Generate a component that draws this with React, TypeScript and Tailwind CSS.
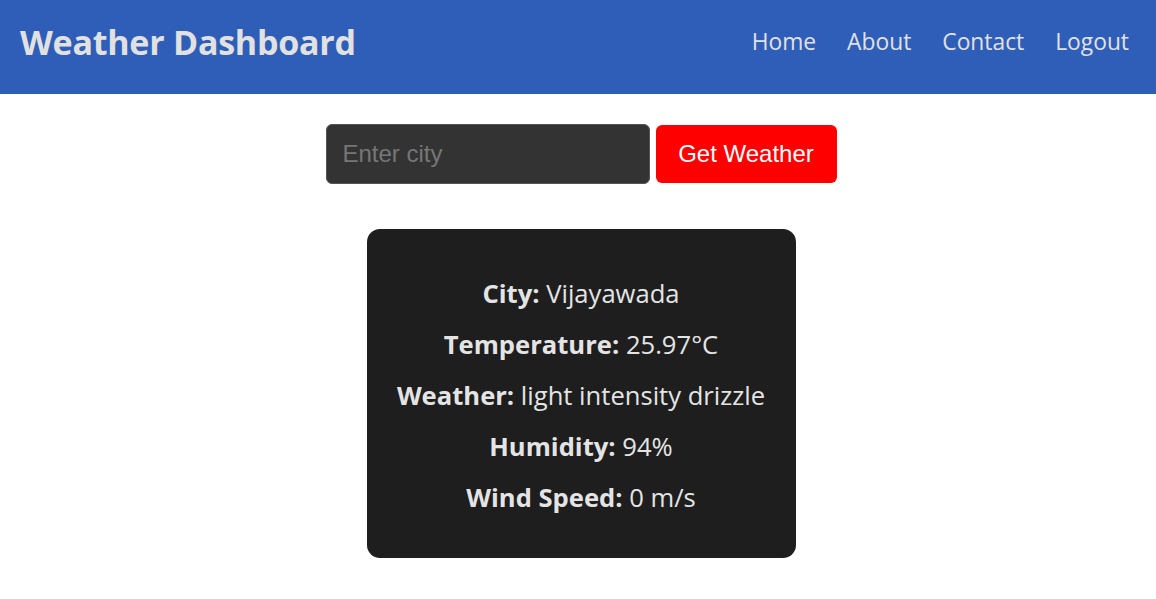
import React from "react";

export default function App() {
  const rows: [string, string][] = [
    ["City:", "Vijayawada"],
    ["Temperature:", "25.97°C"],
    ["Weather:", "light intensity drizzle"],
    ["Humidity:", "94%"],
    ["Wind Speed:", "0 m/s"],
  ];
  return (
    <div className="min-h-[599px] bg-white" style={{ fontFamily: '"Open Sans", "Noto Sans", sans-serif' }}>
      <header className="h-[94px] bg-[#2f5eb8] flex items-center justify-between pl-[20px] pr-[27px] pb-[10px] text-[#e1e1e1]">
        <h1 className="text-[34px] font-bold tracking-[-0.25px]">Weather Dashboard</h1>
        <nav className="flex gap-[31px] text-[22.8px]">
          <a>Home</a>
          <a>About</a>
          <a>Contact</a>
          <a>Logout</a>
        </nav>
      </header>
      <main className="flex flex-col items-center pl-[6px]">
        <div className="flex items-center gap-[6px] mt-[30px]" style={{ fontFamily: '"Liberation Sans", Arial, sans-serif' }}>
          <input
            placeholder="Enter city"
            className="w-[324px] h-[60px] bg-[#333333] rounded-[6px] border border-[#555] px-[16px] text-[24px] text-white placeholder:text-[#767676] outline-none"
          />
          <button className="w-[181px] h-[58px] bg-[#ff0000] rounded-[6px] text-white text-[24px]">Get Weather</button>
        </div>
        <div className="mt-[45px] w-[429px] h-[329px] bg-[#1e1e1e] rounded-[13px] flex flex-col items-center justify-center pt-[4px] text-[#e4e4e4] text-[25.6px]">
          {rows.map(([k, v]) => (
            <p key={k} className="h-[51px] leading-[51px] whitespace-nowrap">
              <b className="font-bold">{k}</b> {v}
            </p>
          ))}
        </div>
      </main>
    </div>
  );
}
